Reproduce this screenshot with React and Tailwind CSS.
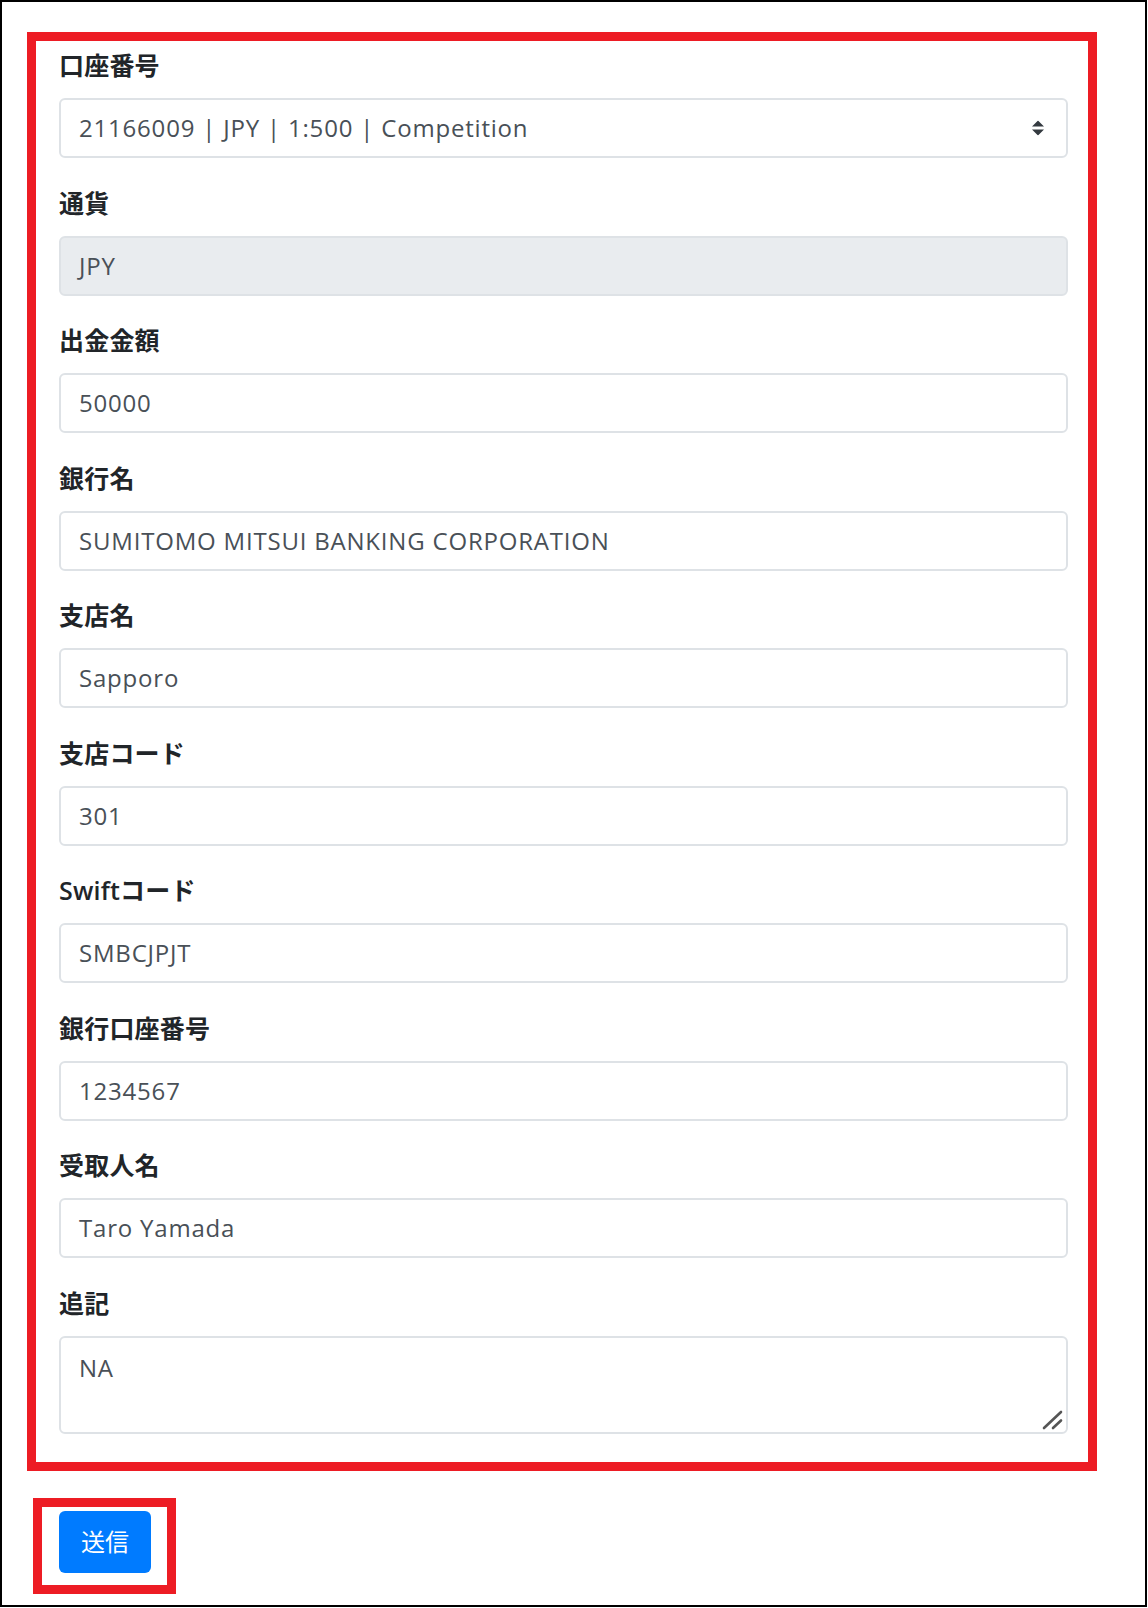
const fields = [
  { label: "通貨", value: "JPY", disabled: true },
  { label: "出金金額", value: "50000" },
  { label: "銀行名", value: "SUMITOMO MITSUI BANKING CORPORATION" },
  { label: "支店名", value: "Sapporo" },
  { label: "支店コード", value: "301" },
  { label: "Swiftコード", value: "SMBCJPJT" },
  { label: "銀行口座番号", value: "1234567" },
  { label: "受取人名", value: "Taro Yamada" },
];

const font = { fontFamily: '"Open Sans", "Noto Sans CJK JP", sans-serif' };

const Label = ({ children }) => (
  <label className="block h-[36px] leading-[36px] text-[25px] font-semibold tracking-[0.2px] text-[#212529] mb-[15px]">
    {children}
  </label>
);

export default function App() {
  return (
    <div className="w-[1148px] h-[1608px] bg-white" style={font}>
      <div className="w-[1147px] h-[1607px] border-2 border-black">
        {/* Form area, outlined in red */}
        <div className="ml-[25px] mt-[30px] w-[1070px] border-[9px] border-[#ed1c24] pt-[6px] pl-[23px] pr-[20px] pb-[28px]">
          <div className="mb-[26.5px]">
            <Label>口座番号</Label>
            <div className="relative h-[60px] rounded-[6px] border-2 border-[#dee2e6] bg-white flex items-center pl-[18px] text-[24px] tracking-[0.8px] text-[#495057]">
              21166009 | JPY | 1:500 | Competition
              <svg
                className="absolute right-[22px] top-1/2 -translate-y-1/2"
                width="12"
                height="15"
                viewBox="0 0 4 5"
              >
                <path fill="#343a40" d="M2 0L0 2h4zm0 5L0 3h4z" />
              </svg>
            </div>
          </div>

          {fields.map((f) => (
            <div key={f.label} className="mb-[26.5px]">
              <Label>{f.label}</Label>
              <div
                className={
                  "h-[60px] rounded-[6px] border-2 border-[#dee2e6] flex items-center pl-[18px] text-[24px] tracking-[0.8px] text-[#495057] " +
                  (f.disabled ? "bg-[#e9ecef]" : "bg-white")
                }
              >
                {f.value}
              </div>
            </div>
          ))}

          <div>
            <Label>追記</Label>
            <div className="relative">
              <textarea
                defaultValue="NA"
                className="block w-full h-[98px] rounded-[6px] border-2 border-[#dee2e6] bg-white pl-[18px] pt-[14px] text-[24px] leading-[32px] tracking-[0.8px] text-[#495057] resize-none outline-none"
                style={font}
              />
              {/* resize grip */}
              <svg
                className="absolute right-[5px] bottom-[4px]"
                width="22"
                height="20"
                viewBox="0 0 22 20"
              >
                <path
                  d="M3 18L20 2M12 18L20 10.5"
                  stroke="#555"
                  strokeWidth="2.6"
                  strokeLinecap="round"
                />
              </svg>
            </div>
          </div>
        </div>

        {/* Submit button, outlined in red */}
        <div className="ml-[31px] mt-[27px] w-[143px] h-[96px] border-[9px] border-[#ed1c24] pl-[17px] pt-[4px]">
          <button className="w-[92px] h-[62px] rounded-[6px] bg-[#007bff] text-white text-[24px] flex items-center justify-center">
            送信
          </button>
        </div>
      </div>
    </div>
  );
}
